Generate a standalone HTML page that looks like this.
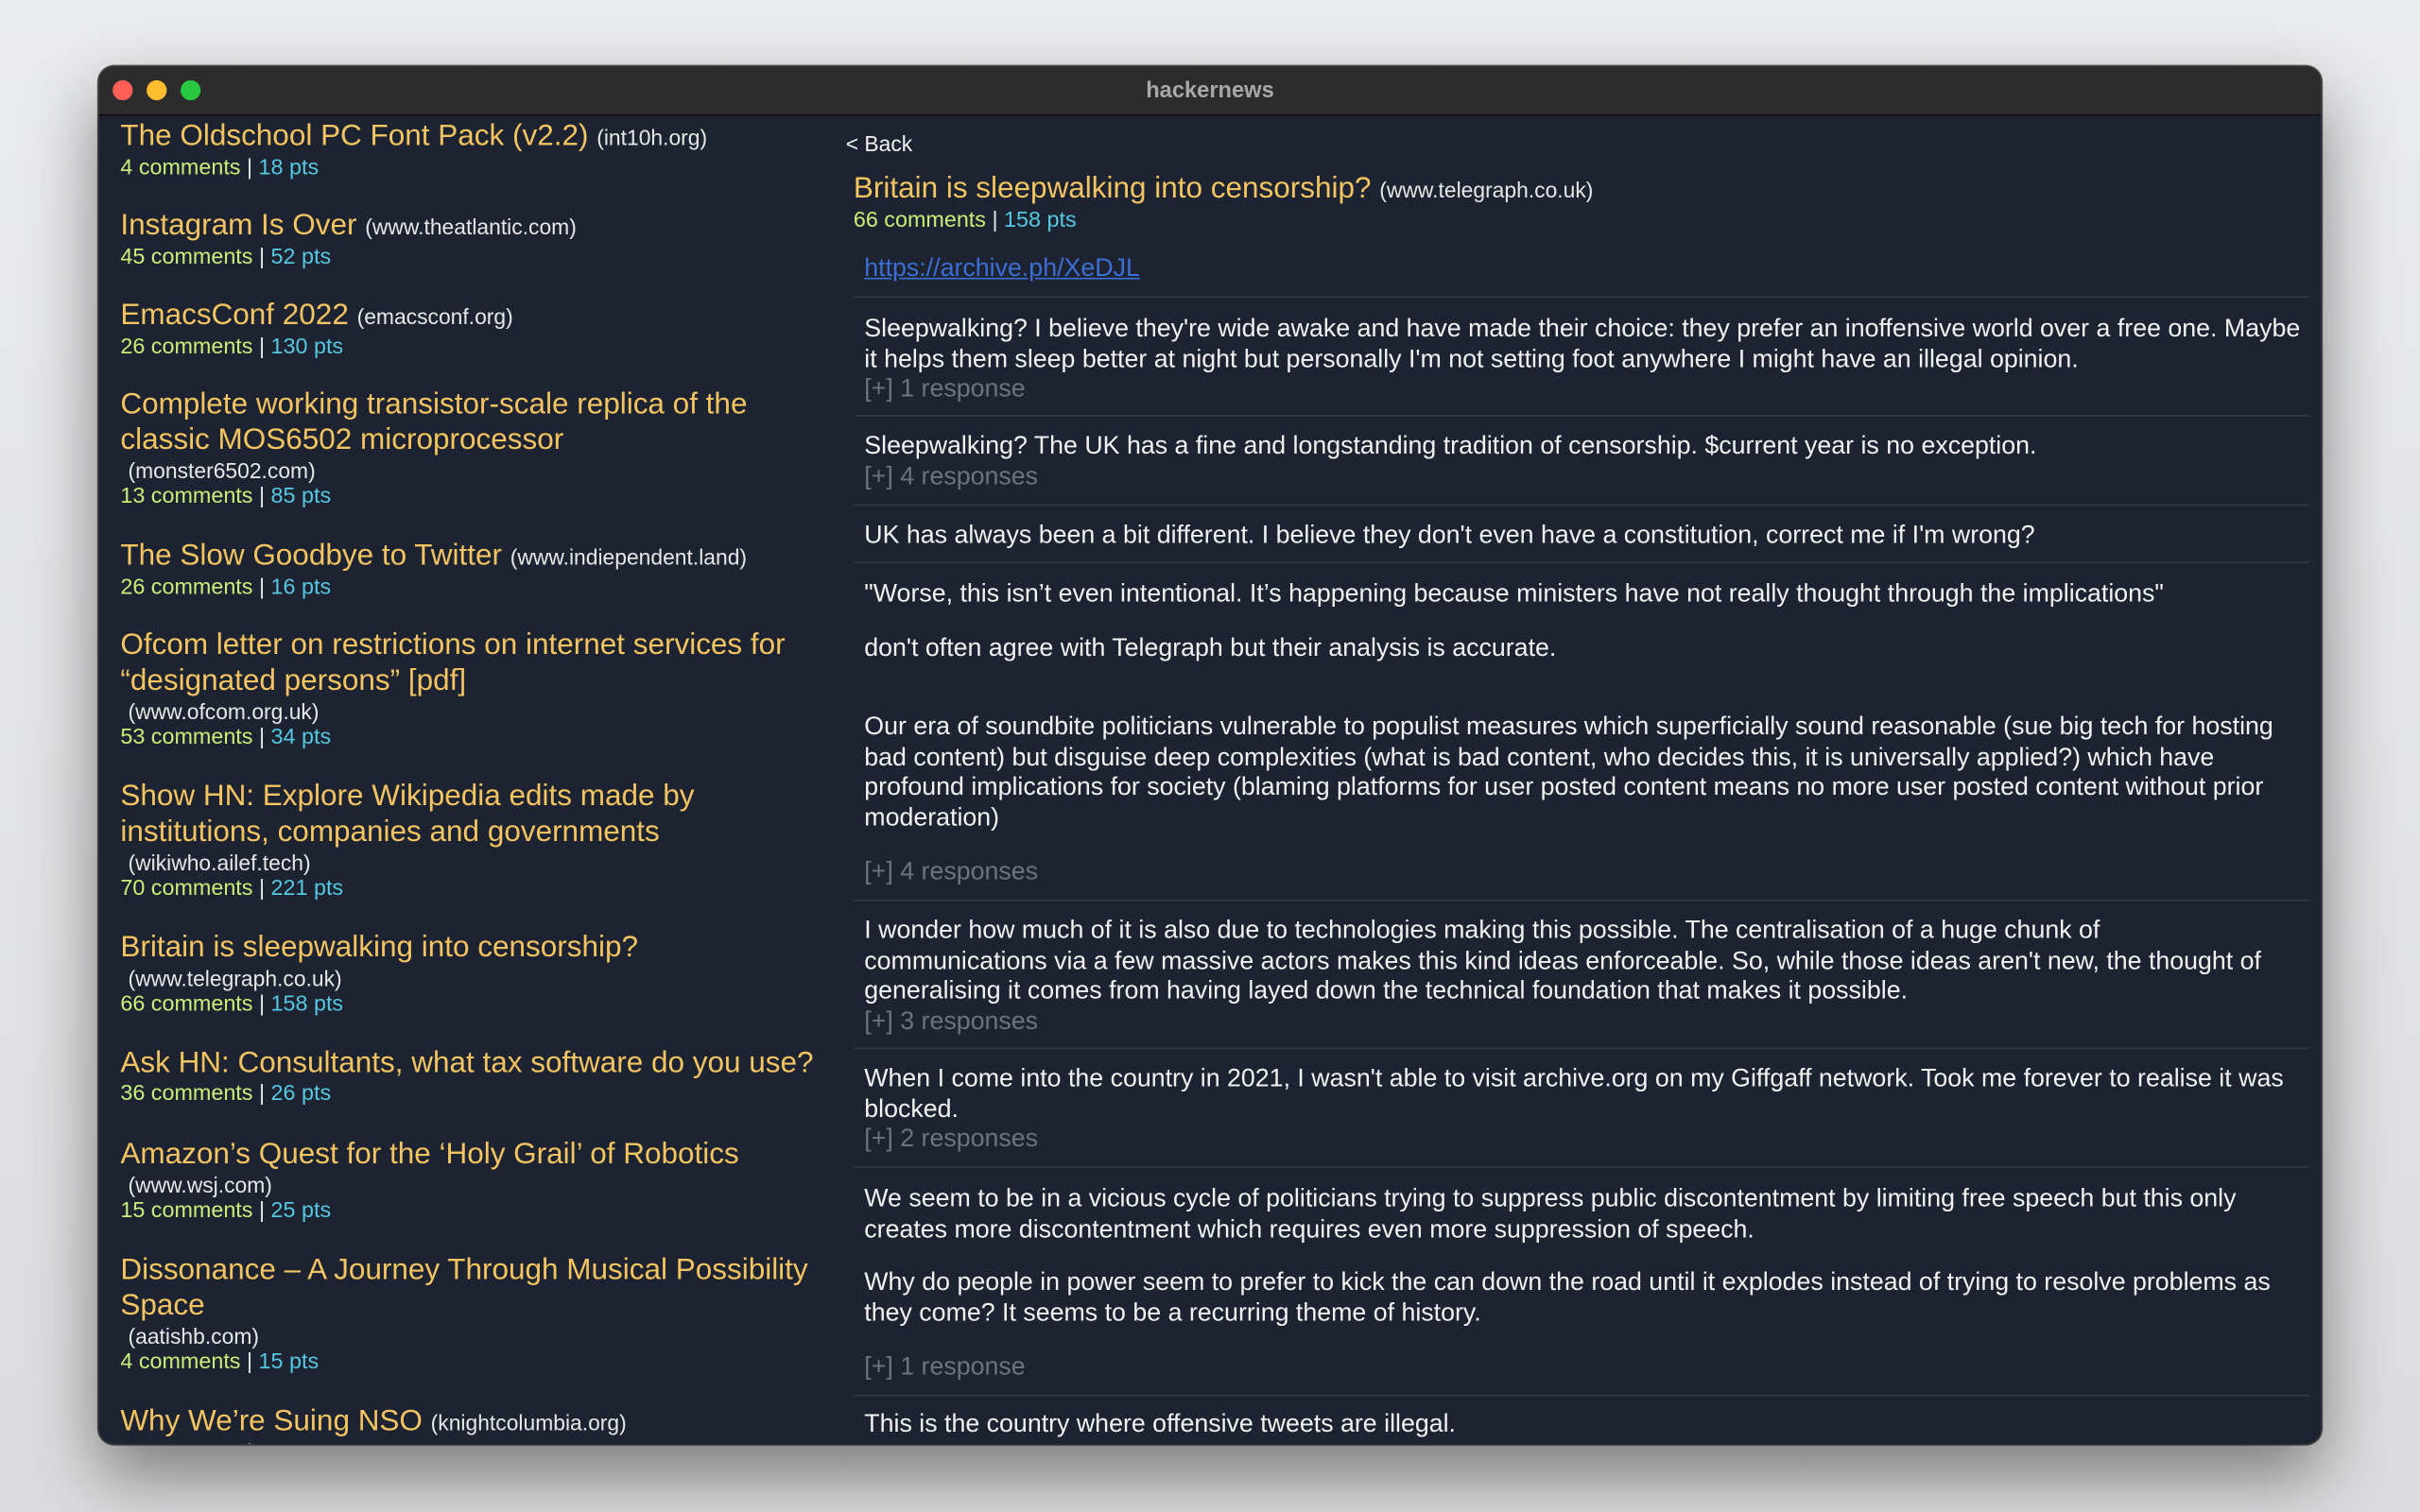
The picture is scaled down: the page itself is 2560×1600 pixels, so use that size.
<!DOCTYPE html>
<html><head><meta charset="utf-8"><style>
*{margin:0;padding:0;box-sizing:border-box}
html,body{width:2560px;height:1600px;overflow:hidden;background:#e4e5e7}
#s{position:absolute;left:0;top:0;width:1568px;height:980px;transform:scale(1.632653);transform-origin:0 0;font-family:"Liberation Sans",Arial,sans-serif;background:linear-gradient(#eaebed,#dcdcde)}
.win{position:absolute;left:64px;top:43px;width:1440px;height:893px;border-radius:10px;background:#1d2330;overflow:hidden;box-shadow:0 20px 45px rgba(0,0,0,.45),0 0 0 1px #555}
.tb{position:absolute;left:0;top:0;width:100%;height:32px;background:#2c2c2c;border-bottom:1px solid #111;text-align:center;color:#a8a8a8;font-weight:bold;font-size:14.5px;line-height:32px}
.d{position:absolute;top:9px;width:13px;height:13px;border-radius:50%}
.it{position:absolute;left:14px;white-space:nowrap}
.t{font-size:19.3px;line-height:23px;color:#f2c462}
.dm{font-size:14px;color:#e8e8e8}
.dl{font-size:14px;line-height:17px;color:#e8e8e8;padding-left:5px}
.m{font-size:14.3px;line-height:17px;color:#e8e8e8}
.g{color:#c9ef7a}.c{color:#55c8e2}
.r{position:absolute;left:496px;white-space:nowrap;color:#f2f2f2;font-size:16.4px;line-height:19.5px}
.gr{color:#6c7480}
.sep{position:absolute;left:489px;width:943px;height:1px;background:#343b48}
</style></head><body><div id="s">
<div class="win">
<div class="tb">hackernews<span class="d" style="left:9px;background:#fe5f57"></span><span class="d" style="left:31px;background:#febc2e"></span><span class="d" style="left:53px;background:#28c840"></span></div>

<div class="it" style="top:34px"><div class="t">The Oldschool PC Font Pack (v2.2) <span class="dm">(int10h.org)</span></div><div class="m"><span class="g">4 comments</span> | <span class="c">18 pts</span></div></div>
<div class="it" style="top:92px"><div class="t">Instagram Is Over <span class="dm">(www.theatlantic.com)</span></div><div class="m"><span class="g">45 comments</span> | <span class="c">52 pts</span></div></div>
<div class="it" style="top:150px"><div class="t">EmacsConf 2022 <span class="dm">(emacsconf.org)</span></div><div class="m"><span class="g">26 comments</span> | <span class="c">130 pts</span></div></div>
<div class="it" style="top:208px"><div class="t">Complete working transistor-scale replica of the<br>classic MOS6502 microprocessor</div><div class="dl">(monster6502.com)</div><div class="m"><span class="g">13 comments</span> | <span class="c">85 pts</span></div></div>
<div class="it" style="top:306px"><div class="t">The Slow Goodbye to Twitter <span class="dm">(www.indiependent.land)</span></div><div class="m"><span class="g">26 comments</span> | <span class="c">16 pts</span></div></div>
<div class="it" style="top:364px"><div class="t">Ofcom letter on restrictions on internet services for<br>“designated persons” [pdf]</div><div class="dl">(www.ofcom.org.uk)</div><div class="m"><span class="g">53 comments</span> | <span class="c">34 pts</span></div></div>
<div class="it" style="top:462px"><div class="t">Show HN: Explore Wikipedia edits made by<br>institutions, companies and governments</div><div class="dl">(wikiwho.ailef.tech)</div><div class="m"><span class="g">70 comments</span> | <span class="c">221 pts</span></div></div>
<div class="it" style="top:560px"><div class="t">Britain is sleepwalking into censorship?</div><div class="dl">(www.telegraph.co.uk)</div><div class="m"><span class="g">66 comments</span> | <span class="c">158 pts</span></div></div>
<div class="it" style="top:635px"><div class="t">Ask HN: Consultants, what tax software do you use?</div><div class="m"><span class="g">36 comments</span> | <span class="c">26 pts</span></div></div>
<div class="it" style="top:694px"><div class="t">Amazon’s Quest for the ‘Holy Grail’ of Robotics</div><div class="dl">(www.wsj.com)</div><div class="m"><span class="g">15 comments</span> | <span class="c">25 pts</span></div></div>
<div class="it" style="top:769px"><div class="t">Dissonance – A Journey Through Musical Possibility<br>Space</div><div class="dl">(aatishb.com)</div><div class="m"><span class="g">4 comments</span> | <span class="c">15 pts</span></div></div>
<div class="it" style="top:867px"><div class="t">Why We’re Suing NSO <span class="dm">(knightcolumbia.org)</span></div><div class="m"><span class="g">3 comments</span> | <span class="c">17 pts</span></div></div>

<div class="it" style="left:484px;top:41px;font-size:14px;line-height:18px;color:#f2f2f2">&lt; Back</div>
<div class="it" style="left:489px;top:68px"><div class="t">Britain is sleepwalking into censorship? <span class="dm">(www.telegraph.co.uk)</span></div><div class="m"><span class="g">66 comments</span> | <span class="c">158 pts</span></div></div>
<div class="r" style="top:122px;color:#3b6fd6;text-decoration:underline">https://archive.ph/XeDJL</div>
<div class="sep" style="top:149px"></div>
<div class="r" style="top:161px">Sleepwalking? I believe they're wide awake and have made their choice: they prefer an inoffensive world over a free one. Maybe<br>it helps them sleep better at night but personally I'm not setting foot anywhere I might have an illegal opinion.<br><span class="gr">[+] 1 response</span></div>
<div class="sep" style="top:226px"></div>
<div class="r" style="top:237px">Sleepwalking? The UK has a fine and longstanding tradition of censorship. $current year is no exception.<br><span class="gr">[+] 4 responses</span></div>
<div class="sep" style="top:284px"></div>
<div class="r" style="top:295px">UK has always been a bit different. I believe they don't even have a constitution, correct me if I'm wrong?</div>
<div class="sep" style="top:321px"></div>
<div class="r" style="top:333px">"Worse, this isn’t even intentional. It’s happening because ministers have not really thought through the implications"</div>
<div class="r" style="top:368px">don't often agree with Telegraph but their analysis is accurate.</div>
<div class="r" style="top:419px">Our era of soundbite politicians vulnerable to populist measures which superficially sound reasonable (sue big tech for hosting<br>bad content) but disguise deep complexities (what is bad content, who decides this, it is universally applied?) which have<br>profound implications for society (blaming platforms for user posted content means no more user posted content without prior<br>moderation)</div>
<div class="r gr" style="top:513px">[+] 4 responses</div>
<div class="sep" style="top:540px"></div>
<div class="r" style="top:551px">I wonder how much of it is also due to technologies making this possible. The centralisation of a huge chunk of<br>communications via a few massive actors makes this kind ideas enforceable. So, while those ideas aren't new, the thought of<br>generalising it comes from having layed down the technical foundation that makes it possible.<br><span class="gr">[+] 3 responses</span></div>
<div class="sep" style="top:636px"></div>
<div class="r" style="top:647px">When I come into the country in 2021, I wasn't able to visit archive.org on my Giffgaff network. Took me forever to realise it was<br>blocked.<br><span class="gr">[+] 2 responses</span></div>
<div class="sep" style="top:713px"></div>
<div class="r" style="top:725px">We seem to be in a vicious cycle of politicians trying to suppress public discontentment by limiting free speech but this only<br>creates more discontentment which requires even more suppression of speech.</div>
<div class="r" style="top:779px">Why do people in power seem to prefer to kick the can down the road until it explodes instead of trying to resolve problems as<br>they come? It seems to be a recurring theme of history.</div>
<div class="r gr" style="top:834px">[+] 1 response</div>
<div class="sep" style="top:861px"></div>
<div class="r" style="top:871px">This is the country where offensive tweets are illegal.</div>
</div>
</div></body></html>
